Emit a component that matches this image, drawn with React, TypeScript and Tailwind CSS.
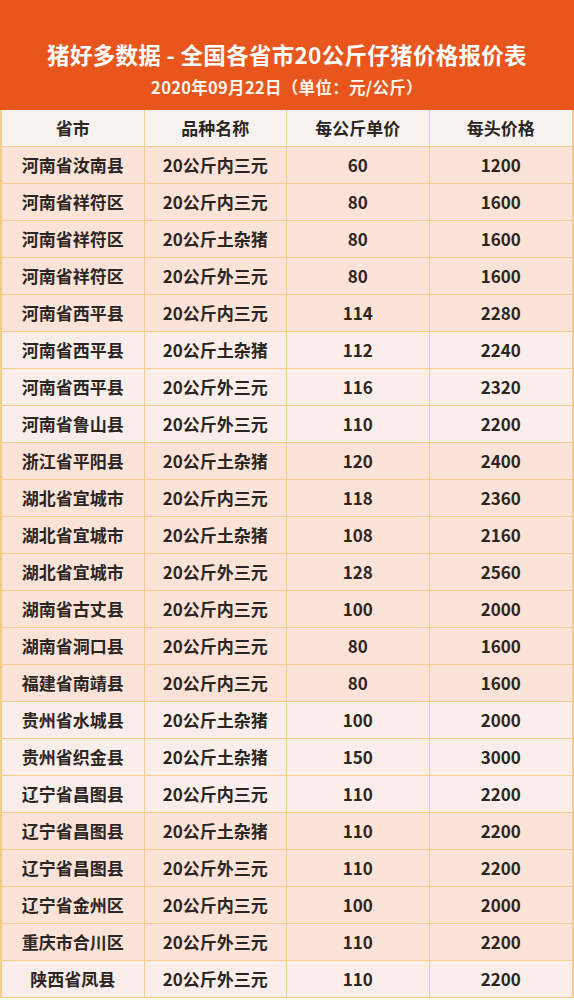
const headers = ["省市", "品种名称", "每公斤单价", "每头价格"];

// [省市, 品种, 单价, 每头, 浅色行]
const rows: [string, string, string, string, boolean][] = [
  ["河南省汝南县", "20公斤内三元", "60", "1200", false],
  ["河南省祥符区", "20公斤内三元", "80", "1600", false],
  ["河南省祥符区", "20公斤土杂猪", "80", "1600", false],
  ["河南省祥符区", "20公斤外三元", "80", "1600", false],
  ["河南省西平县", "20公斤内三元", "114", "2280", false],
  ["河南省西平县", "20公斤土杂猪", "112", "2240", true],
  ["河南省西平县", "20公斤外三元", "116", "2320", true],
  ["河南省鲁山县", "20公斤外三元", "110", "2200", true],
  ["浙江省平阳县", "20公斤土杂猪", "120", "2400", false],
  ["湖北省宜城市", "20公斤内三元", "118", "2360", false],
  ["湖北省宜城市", "20公斤土杂猪", "108", "2160", false],
  ["湖北省宜城市", "20公斤外三元", "128", "2560", false],
  ["湖南省古丈县", "20公斤内三元", "100", "2000", false],
  ["湖南省洞口县", "20公斤内三元", "80", "1600", false],
  ["福建省南靖县", "20公斤内三元", "80", "1600", false],
  ["贵州省水城县", "20公斤土杂猪", "100", "2000", true],
  ["贵州省织金县", "20公斤土杂猪", "150", "3000", true],
  ["辽宁省昌图县", "20公斤内三元", "110", "2200", true],
  ["辽宁省昌图县", "20公斤土杂猪", "110", "2200", false],
  ["辽宁省昌图县", "20公斤外三元", "110", "2200", false],
  ["辽宁省金州区", "20公斤内三元", "100", "2000", false],
  ["重庆市合川区", "20公斤外三元", "110", "2200", false],
  ["陕西省凤县", "20公斤外三元", "110", "2200", true],
];

const font = { fontFamily: '"Noto Sans CJK SC", "Noto Sans", sans-serif' };

export default function App() {
  return (
    <div className="w-[574px] bg-white" style={font}>
      <div className="bg-[#e8561d] h-[110px] flex flex-col items-center pt-[36px] text-white font-bold">
        <h1 className="text-[22.5px] leading-[36px] tracking-[0.3px]">猪好多数据 - 全国各省市20公斤仔猪价格报价表</h1>
        <p className="text-[16.5px] leading-[26px] mt-[2px] text-[#fff6ee] tracking-[0.3px]">2020年09月22日（单位：元/公斤）</p>
      </div>

      <div className="border-x-2 border-[#f3cd8c]">
        <div className="grid grid-cols-4 bg-[#f8f2ee] border-b border-[#f3cd8c] h-[37px]">
          {headers.map((h, i) => (
            <div
              key={h}
              className={`flex items-center justify-center text-[17px] font-bold text-[#2b2523] ${i < 3 ? "border-r border-[#f3cd8c]" : ""}`}
            >
              {h}
            </div>
          ))}
        </div>

        {rows.map((r, idx) => (
          <div
            key={idx}
            className={`grid grid-cols-4 h-[37px] border-b border-[#f3cd8c] ${r[4] ? "bg-[#f9eee9]" : "bg-[#fbe3d7]"}`}
          >
            {r.slice(0, 4).map((c, i) => (
              <div
                key={i}
                className={`flex items-center justify-center text-[17px] font-bold text-[#2b2523] ${i < 3 ? "border-r border-[#f3cd8c]" : ""}`}
              >
                {c as string}
              </div>
            ))}
          </div>
        ))}
      </div>
    </div>
  );
}
